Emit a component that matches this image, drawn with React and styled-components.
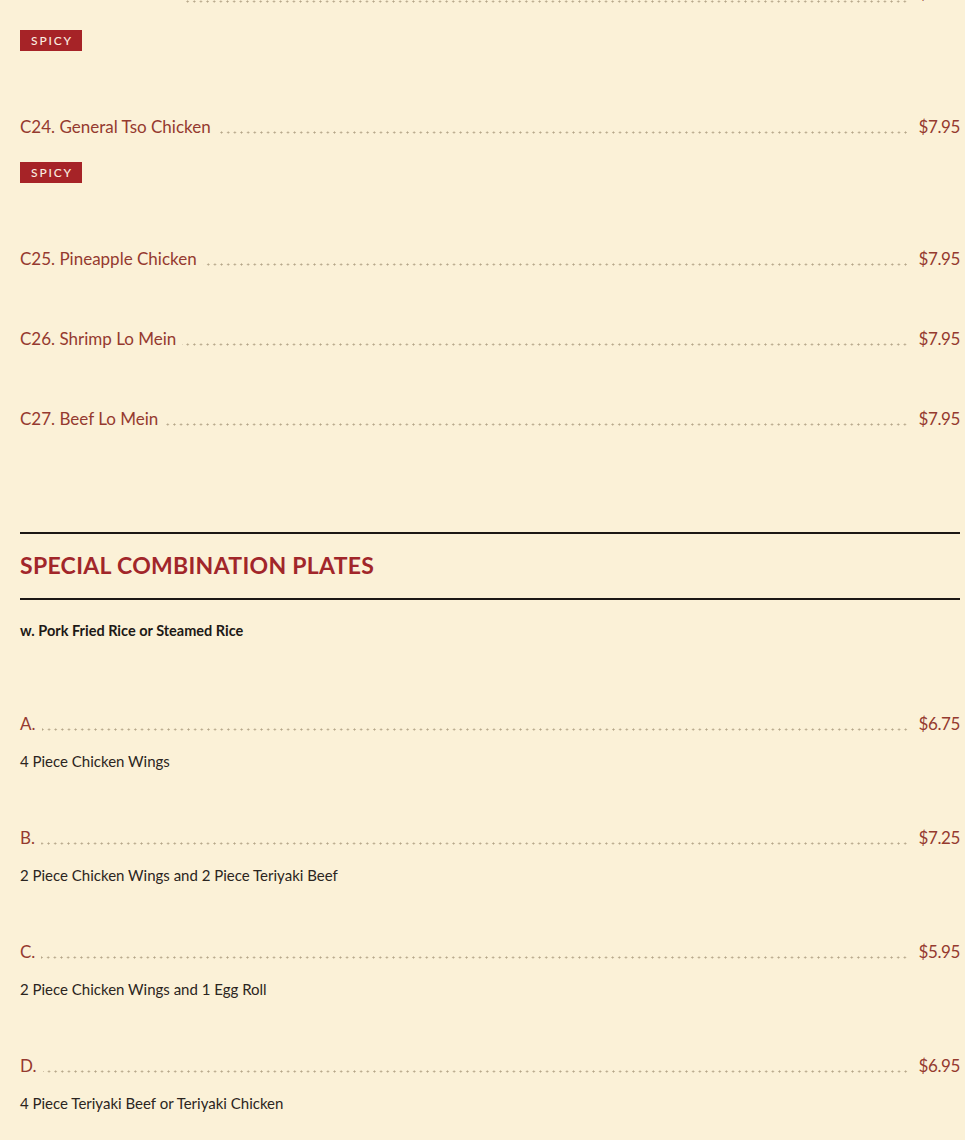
import React from "react";
import styled, { createGlobalStyle } from "styled-components";

const GlobalStyle = createGlobalStyle`
  html, body {
    margin: 0;
    padding: 0;
    background: #fbf1d7;
  }
  body {
    font-family: Lato, "Open Sans", "Liberation Sans", sans-serif;
  }
`;

const Page = styled.main`
  padding: 0 5px 40px 20px;
  overflow: hidden;
`;

const List = styled.div`
  display: flex;
  flex-direction: column;
`;

const Item = styled.div`
  display: flex;
  flex-direction: column;
  padding-bottom: ${(p) => (p.$combo ? "55px" : "56px")};
  margin-top: ${(p) => (p.$cut ? "-19px" : "0")};
`;

const Row = styled.div`
  display: flex;
  align-items: stretch;
  height: 24px;
  line-height: 24px;
  font-size: 17px;
  color: #953a2f;
`;

const Name = styled.span`
  white-space: nowrap;
`;

const Leader = styled.span`
  flex: 1;
  margin: 0 10px 0 6px;
  background-image: radial-gradient(circle, #b3a487 0.8px, transparent 1.3px);
  background-size: 6.65px 3px;
  background-repeat: repeat-x;
  background-position: right 0 top ${(p) => (p.$cut ? "19px" : "16px")};
`;

const Price = styled.span`
  white-space: nowrap;
  letter-spacing: -0.4px;
`;

const Badge = styled.span`
  align-self: flex-start;
  margin: ${(p) => (p.$cut ? "25px" : "23px")} 0 8px;
  height: 21px;
  width: 62px;
  box-sizing: border-box;
  display: flex;
  align-items: center;
  justify-content: center;
  background: #a62327;
  color: #fbeee0;
  font-size: 12px;
  font-weight: 500;
  letter-spacing: 1.8px;
  padding-left: 2px;
`;

const Desc = styled.div`
  margin-top: 15px;
  font-size: 15px;
  line-height: 20px;
  color: #2b2521;
`;

const Section = styled.section`
  margin-top: 45px;
`;

const SectionHeader = styled.header`
  border-top: 2px solid #1b1714;
  border-bottom: 2px solid #1b1714;
  height: 64px;
  display: flex;
  align-items: center;
`;

const Title = styled.h2`
  margin: 0 0 3px;
  font-size: 23px;
  font-weight: 700;
  letter-spacing: 0.3px;
  color: #a1262a;
`;

const Subtitle = styled.p`
  margin: 21px 0 71px;
  font-size: 14.5px;
  line-height: 20px;
  font-weight: 700;
  color: #1d1916;
`;

const items = [
  { name: "C23. Sesame Chicken", price: "$7.95", spicy: true, cut: true },
  { name: "C24. General Tso Chicken", price: "$7.95", spicy: true },
  { name: "C25. Pineapple Chicken", price: "$7.95" },
  { name: "C26. Shrimp Lo Mein", price: "$7.95" },
  { name: "C27. Beef Lo Mein", price: "$7.95" },
];

const combos = [
  { name: "A.", price: "$6.75", desc: "4 Piece Chicken Wings" },
  { name: "B.", price: "$7.25", desc: "2 Piece Chicken Wings and 2 Piece Teriyaki Beef" },
  { name: "C.", price: "$5.95", desc: "2 Piece Chicken Wings and 1 Egg Roll" },
  { name: "D.", price: "$6.95", desc: "4 Piece Teriyaki Beef or Teriyaki Chicken" },
];

function MenuRow({ name, price, cut }) {
  return (
    <Row>
      <Name>{name}</Name>
      <Leader $cut={cut} />
      <Price>{price}</Price>
    </Row>
  );
}

export default function App() {
  return (
    <>
      <GlobalStyle />
      <Page>
        <List>
          {items.map((it) => (
            <Item key={it.name} $cut={it.cut}>
              <MenuRow name={it.name} price={it.price} cut={it.cut} />
              {it.spicy && <Badge $cut={it.cut}>SPICY</Badge>}
            </Item>
          ))}
        </List>
        <Section>
          <SectionHeader>
            <Title>SPECIAL COMBINATION PLATES</Title>
          </SectionHeader>
          <Subtitle>w. Pork Fried Rice or Steamed Rice</Subtitle>
          <List>
            {combos.map((c) => (
              <Item key={c.name} $combo>
                <MenuRow name={c.name} price={c.price} />
                <Desc>{c.desc}</Desc>
              </Item>
            ))}
          </List>
        </Section>
      </Page>
    </>
  );
}
